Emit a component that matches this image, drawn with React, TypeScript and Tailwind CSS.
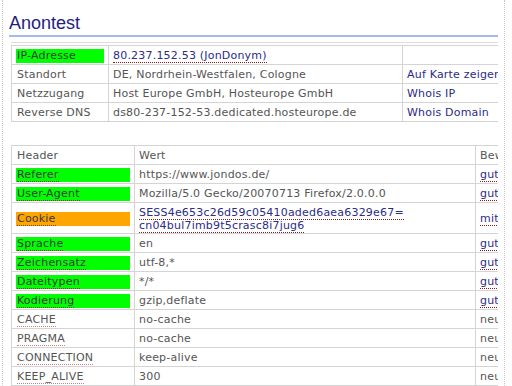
import React from "react";

const green = "bg-[#00ff00]";
const orange = "bg-[#ffa500]";

function Abbr({ children, tone = "red" }: { children: React.ReactNode; tone?: "red" | "dark" | "pink" }) {
  const cls =
    tone === "red"
      ? "border-b border-dotted border-[#8b1a1a]"
      : tone === "dark"
      ? "border-b border-dotted border-[#6b4a2a]"
      : "border-b border-dotted border-[#d08080]";
  return <span className={cls}>{children}</span>;
}

function Label({ bg, children }: { bg?: string; children: React.ReactNode }) {
  if (!bg) return <div className="h-[14px] leading-[14px] pl-px">{children}</div>;
  return <div className={`${bg} h-[14px] leading-[14px] pl-px text-[#3a3a3a]`}>{children}</div>;
}

const td = "border border-[#d4d4d4] pt-[3px] pb-px px-[4px] align-middle leading-[14px] whitespace-nowrap";

export default function App() {
  const headers: { h: string; bg?: string; v: React.ReactNode; r: React.ReactNode }[] = [
    { h: "Referer", bg: green, v: "https://www.jondos.de/", r: <span className="text-[#2b2b88]"><Abbr>gut</Abbr></span> },
    { h: "User-Agent", bg: green, v: "Mozilla/5.0 Gecko/20070713 Firefox/2.0.0.0", r: <span className="text-[#2b2b88]"><Abbr>gut</Abbr></span> },
    {
      h: "Cookie",
      bg: orange,
      v: (
        <span className="text-[#2b2b88] leading-[13px] block">
          <Abbr>SESS4e653c26d59c05410aded6aea6329e67=</Abbr>
          <br />
          <Abbr>cn04bul7imb9t5crasc8i7jug6</Abbr>
        </span>
      ),
      r: <span className="text-[#2b2b88]"><Abbr>mittel</Abbr></span>,
    },
    { h: "Sprache", bg: green, v: "en", r: <span className="text-[#2b2b88]"><Abbr>gut</Abbr></span> },
    { h: "Zeichensatz", bg: green, v: "utf-8,*", r: <span className="text-[#2b2b88]"><Abbr>gut</Abbr></span> },
    { h: "Dateitypen", bg: green, v: "*/*", r: <span className="text-[#2b2b88]"><Abbr>gut</Abbr></span> },
    { h: "Kodierung", bg: green, v: "gzip,deflate", r: <span className="text-[#2b2b88]"><Abbr>gut</Abbr></span> },
    { h: "CACHE", v: "no-cache", r: "neutral" },
    { h: "PRAGMA", v: "no-cache", r: "neutral" },
    { h: "CONNECTION", v: "keep-alive", r: "neutral" },
    { h: "KEEP_ALIVE", v: "300", r: "neutral" },
  ];

  return (
    <div className="w-[512px] h-[386px] overflow-hidden bg-white">
      <div
        className="ml-[2px] w-[503px] h-[386px] border-l border-r border-dotted border-[#c8c8c8] pl-[6px] pr-[6px]"
        style={{ fontFamily: "'DejaVu Sans', Verdana, sans-serif" }}
      >
        <div className="w-[489px] h-[386px] overflow-hidden text-[11px] text-[#555555] tracking-[0.2px]">
          <h1
            className="pt-[13px] text-[18px] leading-[21px] tracking-normal text-[#1e1e82] border-b-2 border-[#a4bcec] pb-[1px]"
            style={{ fontFamily: "'Liberation Sans', Arial, sans-serif" }}
          >
            Anontest
          </h1>

          <div className="mt-[5px] ml-[2px] w-[540px] border-t border-[#dedede] pt-[2px]">
            <table className="border-collapse table-fixed w-[540px]">
              <colgroup>
                <col className="w-[97px]" />
                <col className="w-[294px]" />
                <col className="w-[149px]" />
              </colgroup>
              <tbody>
                <tr>
                  <td className={td}>
                    <Label bg={green}>IP-Adresse</Label>
                  </td>
                  <td className={td}>
                    <span className="text-[#2b2b88]">
                      <Abbr>80.237.152.53 (JonDonym)</Abbr>
                    </span>
                  </td>
                  <td className={td}></td>
                </tr>
                <tr>
                  <td className={td}>
                    <Label>Standort</Label>
                  </td>
                  <td className={td}>DE, Nordrhein-Westfalen, Cologne</td>
                  <td className={td}>
                    <span className="text-[#2b2b88]">Auf Karte zeigen</span>
                  </td>
                </tr>
                <tr>
                  <td className={td}>
                    <Label>Netzzugang</Label>
                  </td>
                  <td className={td}>Host Europe GmbH, Hosteurope GmbH</td>
                  <td className={td}>
                    <span className="text-[#2b2b88]">Whois IP</span>
                  </td>
                </tr>
                <tr>
                  <td className={td}>
                    <Label>Reverse DNS</Label>
                  </td>
                  <td className={td}>ds80-237-152-53.dedicated.hosteurope.de</td>
                  <td className={td}>
                    <span className="text-[#2b2b88]">Whois Domain</span>
                  </td>
                </tr>
              </tbody>
            </table>
          </div>

          <div className="mt-[23px] ml-[2px] w-[540px]">
            <table className="border-collapse table-fixed w-[540px]">
              <colgroup>
                <col className="w-[123px]" />
                <col className="w-[341px]" />
                <col className="w-[76px]" />
              </colgroup>
              <tbody>
                <tr>
                  <td className={td}>
                    <Label>Header</Label>
                  </td>
                  <td className={td}>Wert</td>
                  <td className={td}>Bewertung</td>
                </tr>
                {headers.map((row) => (
                  <tr key={row.h}>
                    <td className={td}>
                      <Label bg={row.bg}>
                        <Abbr tone={row.bg ? "dark" : "pink"}>{row.h}</Abbr>
                      </Label>
                    </td>
                    <td className={td}>{row.v}</td>
                    <td className={td}>{row.r}</td>
                  </tr>
                ))}
              </tbody>
            </table>
          </div>
        </div>
      </div>
    </div>
  );
}
